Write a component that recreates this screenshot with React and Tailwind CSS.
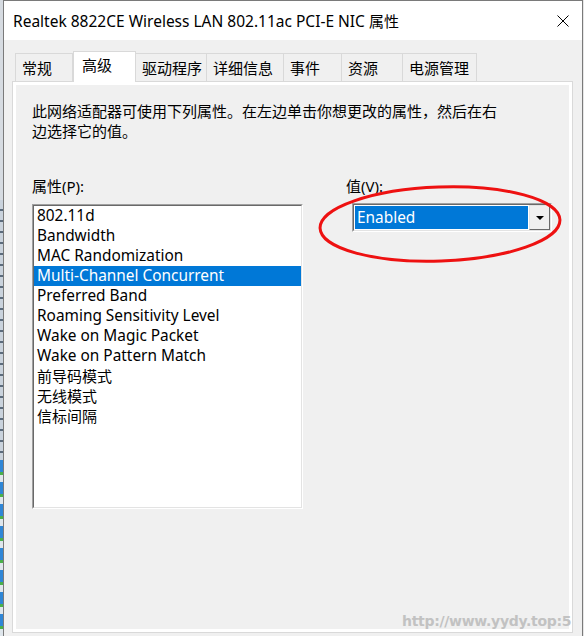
import React from 'react';

const tabs = [
  { label: '常规', w: 58 },
  { label: '高级', w: 63, active: true },
  { label: '驱动程序', w: 72 },
  { label: '详细信息', w: 78 },
  { label: '事件', w: 59 },
  { label: '资源', w: 62 },
  { label: '电源管理', w: 75 },
];

const props = [
  '802.11d',
  'Bandwidth',
  'MAC Randomization',
  'Multi-Channel Concurrent',
  'Preferred Band',
  'Roaming Sensitivity Level',
  'Wake on Magic Packet',
  'Wake on Pattern Match',
  '前导码模式',
  '无线模式',
  '信标间隔',
];

const tabWidth = {
  58: 'w-[58px]',
  59: 'w-[59px]',
  62: 'w-[62px]',
  63: 'w-[63px]',
  72: 'w-[72px]',
  75: 'w-[75px]',
  78: 'w-[78px]',
};

// latin strings look a touch wider in the original UI font
const isLatin = (s) => /^[\x00-\x7f]+$/.test(s);

function Tab({ label, w, active }) {
  if (active) {
    return (
      <div className={`${tabWidth[w]} relative z-10 -mb-px h-[31px] border border-b-0 border-[#d9d9d9] bg-white pl-[8px] pt-[3px] leading-[20px]`}>
        {label}
      </div>
    );
  }
  return (
    <div className={`${tabWidth[w]} h-[28px] border border-b-0 border-[#d9d9d9] bg-[#f0f0f0] pl-[6px] pt-[4px] leading-[20px] -ml-px first:ml-0`}>
      {label}
    </div>
  );
}

export default function App() {
  return (
    <div className="relative flex h-[636px] w-[584px] overflow-hidden bg-[#f0f0f0] text-[15px] text-black font-['Noto_Sans','Noto_Sans_CJK_SC',sans-serif]">
      {/* desktop peeking out on the left */}
      <div className="flex w-[3px] flex-col">
        <div className="h-[200px] bg-[#d6dbe1]" />
        <div className="h-[260px] bg-[repeating-linear-gradient(180deg,#c9d2dc_0px,#c9d2dc_9px,#5b6b7c_9px,#5b6b7c_11px)]" />
        <div className="flex-1 bg-[repeating-linear-gradient(180deg,#2f86d6_0px,#2f86d6_12px,#49b04a_12px,#49b04a_15px,#dfe6ec_15px,#dfe6ec_22px)]" />
      </div>

      {/* window */}
      <div className="flex w-[580px] flex-col border-x border-t border-[#7a7a7a]">
        <div className="flex h-[39px] items-center justify-between bg-white pl-[9px] pr-[13px]">
          <span className="leading-[20px]">
            <span className="text-[15.5px]">Realtek 8822CE Wireless LAN 802.11ac PCI-E NIC </span>属性
          </span>
          <svg width="12" height="12" viewBox="0 0 12 12" className="mt-px">
            <path d="M0.5 0.5 L11.5 11.5 M11.5 0.5 L0.5 11.5" stroke="#000" strokeWidth="1" fill="none" />
          </svg>
        </div>

        <div className="flex flex-1 flex-col bg-[#f0f0f0] pl-[8px] pr-[9px] pt-[11px]">
          <div className="flex h-[30px] items-end pl-[3px]">
            {tabs.map((t) => (
              <Tab key={t.label} {...t} />
            ))}
          </div>

          <div className="h-[552px] border border-[#d9d9d9] bg-white p-[3px]">
            <div className="h-full bg-[#f0f0f0] pl-[16px] pt-[16px] leading-[20px]">
              <div className="whitespace-nowrap">此网络适配器可使用下列属性。在左边单击你想更改的属性，然后在右</div>
              <div className="whitespace-nowrap">边选择它的值。</div>

              <div className="mt-[35px] flex">
                <div className="w-[271px]">
                  <div>属性(P):</div>
                  <div className="mt-[8px] h-[305px] border border-b-white border-l-[#a0a0a0] border-r-white border-t-[#a0a0a0]">
                    <div className="h-full border border-b-[#e3e3e3] border-l-[#696969] border-r-[#e3e3e3] border-t-[#696969] bg-white">
                      {props.map((p, i) => (
                        <div
                          key={p}
                          className={`h-[20px] whitespace-nowrap pl-[3px] leading-[20px] ${isLatin(p) ? 'text-[15.4px]' : ''} ${i === 3 ? 'bg-[#0078d7] text-white' : ''}`}
                        >
                          {p}
                        </div>
                      ))}
                    </div>
                  </div>
                </div>

                <div className="ml-[43px]">
                  <div>值(V):</div>
                  <div className="ml-[6px] mt-[7px] h-[29px] w-[200px] border border-b-white border-l-[#a0a0a0] border-r-white border-t-[#a0a0a0]">
                    <div className="flex h-full border border-b-[#e3e3e3] border-l-[#696969] border-r-[#e3e3e3] border-t-[#696969] bg-white">
                      <div className="m-px flex-1 bg-[#0078d7] pl-[2px] text-[15.4px] leading-[23px] text-white">Enabled</div>
                      <div className="flex w-[21px] items-center justify-center border border-b-[#696969] border-l-[#e3e3e3] border-r-[#696969] border-t-[#e3e3e3] bg-[#f0f0f0]">
                        <svg width="8" height="4" viewBox="0 0 8 4">
                          <path d="M0 0 H8 L4 4 Z" fill="#000" />
                        </svg>
                      </div>
                    </div>
                  </div>
                </div>
              </div>
            </div>
          </div>
        </div>
      </div>
      <div className="w-px bg-[#e6e6e6]" />

      {/* red annotation circle drawn over the value box */}
      <svg className="pointer-events-none absolute left-[316px] top-[183px]" width="250" height="84" viewBox="0 0 250 84">
        <ellipse cx="124" cy="41" rx="120" ry="37" transform="rotate(-2 124 41)" fill="none" stroke="#ee1111" strokeWidth="3" />
      </svg>

      {/* watermark */}
      <div className="pointer-events-none absolute left-[402px] top-[612px] font-['DejaVu_Sans',sans-serif] text-[14px] font-bold leading-[18px] tracking-[-0.3px] text-[#c2c2c2]">
        http://www.yydy.top:5
      </div>
    </div>
  );
}
